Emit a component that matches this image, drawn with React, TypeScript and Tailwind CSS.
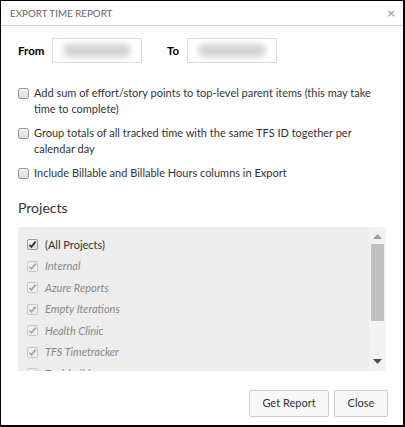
import React from "react";

function Box({ checked, dim }: { checked?: boolean; dim?: boolean }) {
  return (
    <span
      className={`relative inline-flex shrink-0 w-[11px] h-[11px] rounded-[2px] border ${
        dim ? "border-[#c8c8c8] bg-[#f0f0f0]" : "border-[#9a9a9a] bg-gradient-to-b from-[#f4f4f4] to-[#dcdcdc]"
      }`}
    >
      {checked && (
        <svg viewBox="0 0 11 11" className="absolute left-[-1px] top-[-1px] w-[11px] h-[11px]">
          <path
            d="M2.5 5.8 L4.4 7.8 L8.6 2.6"
            fill="none"
            stroke={dim ? "#a8a8a8" : "#333"}
            strokeWidth="1.8"
          />
        </svg>
      )}
    </span>
  );
}

function Blur() {
  return <div className="w-[66px] h-[13px] rounded-sm bg-[#d2d2d2] blur-[3px]" />;
}

const projects = ["Internal", "Azure Reports", "Empty Iterations", "Health Clinic", "TFS Timetracker", "Toolsheild"];

export default function App() {
  return (
    <div
      className="w-[405px] h-[427px] bg-white border-l border-t border-r-2 border-b-2 border-black flex flex-col text-[#333]"
      style={{ fontFamily: 'Lato, "Open Sans", sans-serif' }}
    >
      <div className="h-[25px] shrink-0 border-b border-[#cfcfcf] flex items-center justify-between pl-[9px] pr-[8px]">
        <span className="text-[9.8px] text-[#666]">EXPORT TIME REPORT</span>
        <span className="text-[14px] font-bold text-[#aaa] leading-none">×</span>
      </div>

      <div className="flex-1 flex flex-col px-[17px]">
        <div className="flex items-center mt-[12px] h-[25px]">
          <span className="text-[11.5px] font-bold text-black w-[34px]">From</span>
          <div className="w-[90px] h-[25px] border border-[#ddd] flex items-center justify-center">
            <Blur />
          </div>
          <span className="text-[11.5px] font-bold text-black ml-[25px] w-[20px]">To</span>
          <div className="w-[90px] h-[25px] border border-[#ddd] flex items-center justify-center">
            <Blur />
          </div>
        </div>

        <div className="mt-[22px] flex flex-col gap-[8px] text-[11px] leading-[16px] text-[#333]">
          <label className="flex gap-[5px]">
            <span className="pt-[2px]"><Box /></span>
            <span>Add sum of effort/story points to top-level parent items (this may take time to complete)</span>
          </label>
          <label className="flex gap-[5px]">
            <span className="pt-[2px]"><Box /></span>
            <span>Group totals of all tracked time with the same TFS ID together per calendar day</span>
          </label>
          <label className="flex gap-[5px]">
            <span className="pt-[2px]"><Box /></span>
            <span>Include Billable and Billable Hours columns in Export</span>
          </label>
        </div>

        <div className="mt-[15px] text-[14px] leading-[20px] text-[#333]">Projects</div>

        <div className="mt-[9px] h-[144px] bg-[#ededed] flex overflow-hidden">
          <div className="flex-1 pl-[9px] pt-[7px] text-[11px] overflow-hidden">
            <div className="flex items-center gap-[7px] h-[21.5px]">
              <Box checked />
              <span className="text-[#333]">(All Projects)</span>
            </div>
            {projects.map((p) => (
              <div key={p} className="flex items-center gap-[7px] h-[21.5px]">
                <Box checked dim />
                <span className="italic text-[#888]">{p}</span>
              </div>
            ))}
          </div>
          <div className="w-[17px] bg-[#f2f2f2] flex flex-col items-center">
            <svg width="9" height="5" className="mt-[7px]" viewBox="0 0 9 5">
              <path d="M0 5 L4.5 0 L9 5 Z" fill="#a0a0a0" />
            </svg>
            <div className="mt-[5px] w-[13px] h-[77px] bg-[#c1c1c1]" />
            <div className="flex-1" />
            <svg width="9" height="5" className="mb-[7px]" viewBox="0 0 9 5">
              <path d="M0 0 L9 0 L4.5 5 Z" fill="#505050" />
            </svg>
          </div>
        </div>

        <div className="mt-[19px] flex justify-end gap-[5px] mr-[-2px]">
          <button className="w-[80px] h-[27px] border border-[#ccc] rounded-[2px] bg-[#f7f7f7] text-[11px] text-[#333]">
            Get Report
          </button>
          <button className="w-[54px] h-[27px] border border-[#ccc] rounded-[2px] bg-[#f7f7f7] text-[11px] text-[#333]">
            Close
          </button>
        </div>
      </div>
    </div>
  );
}
